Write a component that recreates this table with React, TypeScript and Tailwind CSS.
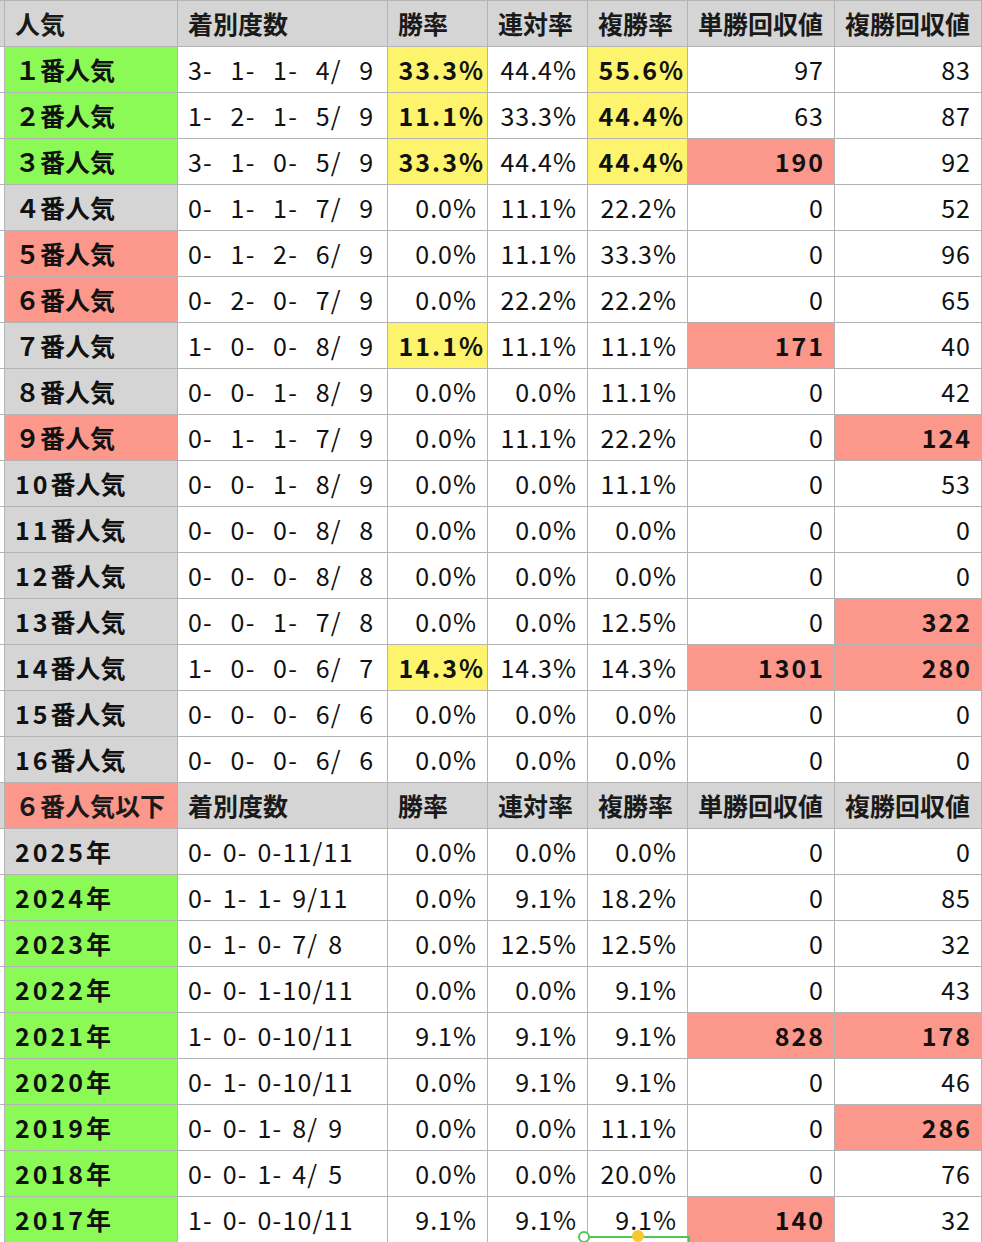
import React from 'react';

type Row = { label: string; bg: 'g' | 'r' | 'x'; frac: string; vals: string[] };

const bgs = {
  g: 'bg-[#8cfa56]',
  r: 'bg-[#fc978c]',
  x: 'bg-[#d5d5d5]',
};

const headers = ['着別度数', '勝率', '連対率', '複勝率', '単勝回収値', '複勝回収値'];

// '*' at the start marks a highlighted cell
const ninki: Row[] = [
  { label: '１番人気', bg: 'g', frac: '3-  1-  1-  4/  9', vals: ['*33.3%', '44.4%', '*55.6%', '97', '83'] },
  { label: '２番人気', bg: 'g', frac: '1-  2-  1-  5/  9', vals: ['*11.1%', '33.3%', '*44.4%', '63', '87'] },
  { label: '３番人気', bg: 'g', frac: '3-  1-  0-  5/  9', vals: ['*33.3%', '44.4%', '*44.4%', '*190', '92'] },
  { label: '４番人気', bg: 'x', frac: '0-  1-  1-  7/  9', vals: ['0.0%', '11.1%', '22.2%', '0', '52'] },
  { label: '５番人気', bg: 'r', frac: '0-  1-  2-  6/  9', vals: ['0.0%', '11.1%', '33.3%', '0', '96'] },
  { label: '６番人気', bg: 'r', frac: '0-  2-  0-  7/  9', vals: ['0.0%', '22.2%', '22.2%', '0', '65'] },
  { label: '７番人気', bg: 'x', frac: '1-  0-  0-  8/  9', vals: ['*11.1%', '11.1%', '11.1%', '*171', '40'] },
  { label: '８番人気', bg: 'x', frac: '0-  0-  1-  8/  9', vals: ['0.0%', '0.0%', '11.1%', '0', '42'] },
  { label: '９番人気', bg: 'r', frac: '0-  1-  1-  7/  9', vals: ['0.0%', '11.1%', '22.2%', '0', '*124'] },
  { label: '10番人気', bg: 'x', frac: '0-  0-  1-  8/  9', vals: ['0.0%', '0.0%', '11.1%', '0', '53'] },
  { label: '11番人気', bg: 'x', frac: '0-  0-  0-  8/  8', vals: ['0.0%', '0.0%', '0.0%', '0', '0'] },
  { label: '12番人気', bg: 'x', frac: '0-  0-  0-  8/  8', vals: ['0.0%', '0.0%', '0.0%', '0', '0'] },
  { label: '13番人気', bg: 'x', frac: '0-  0-  1-  7/  8', vals: ['0.0%', '0.0%', '12.5%', '0', '*322'] },
  { label: '14番人気', bg: 'x', frac: '1-  0-  0-  6/  7', vals: ['*14.3%', '14.3%', '14.3%', '*1301', '*280'] },
  { label: '15番人気', bg: 'x', frac: '0-  0-  0-  6/  6', vals: ['0.0%', '0.0%', '0.0%', '0', '0'] },
  { label: '16番人気', bg: 'x', frac: '0-  0-  0-  6/  6', vals: ['0.0%', '0.0%', '0.0%', '0', '0'] },
];

const years: Row[] = [
  { label: '2025年', bg: 'x', frac: '0- 0- 0-11/11', vals: ['0.0%', '0.0%', '0.0%', '0', '0'] },
  { label: '2024年', bg: 'g', frac: '0- 1- 1- 9/11', vals: ['0.0%', '9.1%', '18.2%', '0', '85'] },
  { label: '2023年', bg: 'g', frac: '0- 1- 0- 7/ 8', vals: ['0.0%', '12.5%', '12.5%', '0', '32'] },
  { label: '2022年', bg: 'g', frac: '0- 0- 1-10/11', vals: ['0.0%', '0.0%', '9.1%', '0', '43'] },
  { label: '2021年', bg: 'g', frac: '1- 0- 0-10/11', vals: ['9.1%', '9.1%', '9.1%', '*828', '*178'] },
  { label: '2020年', bg: 'g', frac: '0- 1- 0-10/11', vals: ['0.0%', '9.1%', '9.1%', '0', '46'] },
  { label: '2019年', bg: 'g', frac: '0- 0- 1- 8/ 9', vals: ['0.0%', '0.0%', '11.1%', '0', '*286'] },
  { label: '2018年', bg: 'g', frac: '0- 0- 1- 4/ 5', vals: ['0.0%', '0.0%', '20.0%', '0', '76'] },
  { label: '2017年', bg: 'g', frac: '1- 0- 0-10/11', vals: ['9.1%', '9.1%', '9.1%', '*140', '32'] },
];

const cell = 'h-[46px] border-r border-b border-[#b4b4b4] flex items-center overflow-hidden';

function Label({ text }: { text: string }) {
  // half-width digits in the labels are set a little wider, like the sheet's font
  const m = text.match(/^(\d+)(.*)$/);
  if (!m) return <>{text}</>;
  return (
    <>
      <span className="tracking-[3px]">{m[1]}</span>
      {m[2]}
    </>
  );
}

function HeaderRow({ first, firstBg }: { first: string; firstBg: string }) {
  return (
    <>
      <div className={`${cell} bg-[#d5d5d5]`} />
      <div className={`${cell} ${firstBg} pl-[10px] font-bold text-[#1a1a1a]`}>{first}</div>
      {headers.map((h) => (
        <div key={h} className={`${cell} bg-[#d5d5d5] pl-[10px] font-bold text-[#1a1a1a]`}>
          {h}
        </div>
      ))}
    </>
  );
}

function DataRow({ row, wide }: { row: Row; wide?: boolean }) {
  return (
    <>
      <div className={`${cell} bg-white`} />
      <div className={`${cell} ${bgs[row.bg]} pl-[10px] font-bold text-[#111]`}>
        <Label text={row.label} />
      </div>
      <div
        className={`${cell} bg-white pl-[10px] whitespace-pre tracking-[1.2px] text-[#111] ${
          wide ? '[word-spacing:2px]' : '[word-spacing:3px]'
        }`}
      >
        {row.frac}
      </div>
      {row.vals.map((v, i) => {
        const hl = v.startsWith('*');
        const text = hl ? v.slice(1) : v;
        const isRate = i < 3;
        let cls = 'bg-white pr-[10px] tracking-[1px] text-[#111]';
        if (hl && isRate) cls = 'bg-[#fdf36c] pr-[2px] tracking-[2px] font-bold text-[#111]';
        if (hl && !isRate) cls = 'bg-[#fc978c] pr-[9px] tracking-[2px] font-bold text-[#111]';
        return (
          <div key={i} className={`${cell} justify-end ${cls}`}>
            {text}
          </div>
        );
      })}
    </>
  );
}

export default function App() {
  return (
    <div
      className="relative w-[982px] h-[1242px] overflow-hidden bg-white text-[25px] leading-none"
      style={{ fontFamily: '"Noto Sans CJK JP", "Noto Sans", sans-serif' }}
    >
      <div className="grid grid-cols-[5px_173px_210px_100px_100px_100px_147px_147px] border-t border-[#b4b4b4]">
        <HeaderRow first="人気" firstBg="bg-[#d5d5d5]" />
        {ninki.map((r) => (
          <DataRow key={r.label} row={r} wide />
        ))}
        <HeaderRow first="６番人気以下" firstBg="bg-[#fc978c]" />
        {years.map((r) => (
          <DataRow key={r.label} row={r} />
        ))}
      </div>

      {/* selection handles at the bottom */}
      <div className="absolute left-[584px] top-[1236px] w-[106px] h-[2px] bg-[#4fc65a]" />
      <div className="absolute left-[688px] top-[1236px] w-[2px] h-[8px] bg-[#4fc65a]" />
      <div className="absolute left-[578px] top-[1231px] w-[12px] h-[12px] rounded-full border-2 border-[#4fc65a] bg-white" />
      <div className="absolute left-[632px] top-[1230px] w-[12px] h-[12px] rounded-full bg-[#f8c832]" />
    </div>
  );
}
